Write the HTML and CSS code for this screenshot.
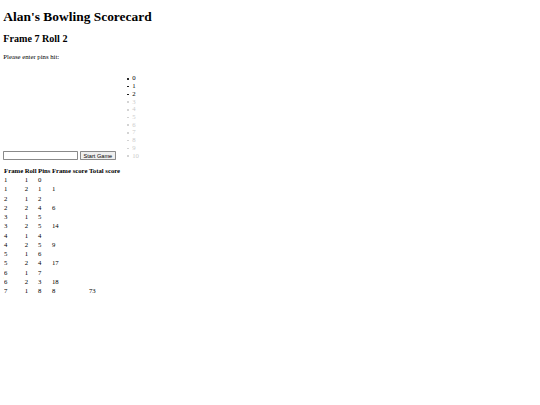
FILE: index.html
```html
<!DOCTYPE html>
<html>
<head>
<meta charset="utf-8">
<title>Alan's Bowling Scorecard</title>
<link rel="stylesheet" href="styles.css">
</head>
<body class="page">
<h1 class="title">Alan's Bowling Scorecard</h1>
<h2 class="status">Frame 7 Roll 2</h2>
<p class="prompt">Please enter pins hit:</p>
<div class="controls"><input class="name-input" type="text"> <button class="start-btn">Start Game</button> <ul class="pins">
<li class="pin">0</li>
<li class="pin">1</li>
<li class="pin">2</li>
<li class="pin pin-off">3</li>
<li class="pin pin-off">4</li>
<li class="pin pin-off">5</li>
<li class="pin pin-off">6</li>
<li class="pin pin-off">7</li>
<li class="pin pin-off">8</li>
<li class="pin pin-off">9</li>
<li class="pin pin-off">10</li>
</ul></div>
<table class="scores">
<thead>
<tr><th>Frame</th><th>Roll</th><th>Pins</th><th>Frame score</th><th>Total score</th></tr>
</thead>
<tbody>
<tr><td>1</td><td>1</td><td>0</td><td></td><td></td></tr>
<tr><td>1</td><td>2</td><td>1</td><td>1</td><td></td></tr>
<tr><td>2</td><td>1</td><td>2</td><td></td><td></td></tr>
<tr><td>2</td><td>2</td><td>4</td><td>6</td><td></td></tr>
<tr><td>3</td><td>1</td><td>5</td><td></td><td></td></tr>
<tr><td>3</td><td>2</td><td>5</td><td>14</td><td></td></tr>
<tr><td>4</td><td>1</td><td>4</td><td></td><td></td></tr>
<tr><td>4</td><td>2</td><td>5</td><td>9</td><td></td></tr>
<tr><td>5</td><td>1</td><td>6</td><td></td><td></td></tr>
<tr><td>5</td><td>2</td><td>4</td><td>17</td><td></td></tr>
<tr><td>6</td><td>1</td><td>7</td><td></td><td></td></tr>
<tr><td>6</td><td>2</td><td>3</td><td>18</td><td></td></tr>
<tr><td>7</td><td>1</td><td>8</td><td>8</td><td>73</td></tr>
</tbody>
</table>
</body>
</html>
```
FILE: styles.css
```css
.page {
  margin: 3.36px;
  font-family: "Liberation Serif", "Times New Roman", serif;
  font-size: 6.72px;
  line-height: 7.72px;
  color: #000;
  background: #fff;
}
.title {
  font-size: 13.44px;
  line-height: 15.45px;
  font-weight: bold;
  margin: 5.5px 0 9px;
}
.status {
  font-size: 10.08px;
  line-height: 11.6px;
  font-weight: bold;
  margin: 8.37px 0;
}
.prompt {
  margin: 6.72px 0;
}
.name-input {
  box-sizing: border-box;
  width: 75px;
  height: 8.8px;
  padding: 0.4px 0.8px;
  border: 0.8px solid #8a8a8a;
  border-radius: 0.8px;
  font-family: "Liberation Sans", Arial, sans-serif;
  font-size: 5.6px;
  margin: 0 0 1px;
  vertical-align: baseline;
}
.start-btn {
  box-sizing: border-box;
  height: 9.6px;
  padding: 0.4px 2.5px;
  border: 0.8px solid #8a8a8a;
  border-radius: 0.8px;
  background: #efefef;
  color: #000;
  font-family: "Liberation Sans", Arial, sans-serif;
  font-size: 5.6px;
  margin: 0;
  vertical-align: baseline;
}
.pins {
  display: inline-block;
  margin: 6.72px 0;
  padding-left: 14.8px;
  list-style: none;
  vertical-align: baseline;
}
.pin::before {
  content: "";
  display: inline-block;
  width: 1.6px;
  height: 1.6px;
  border-radius: 50%;
  background: currentColor;
  margin-left: -5.2px;
  margin-right: 3.6px;
  vertical-align: middle;
}
.pin-off {
  color: #cccccc;
}
.scores {
  border-spacing: 0;
}
.scores th {
  padding: 0.78px 0.75px;
  font-weight: bold;
  text-align: center;
}
.scores td {
  padding: 0.78px 0.75px;
  text-align: left;
}
```
